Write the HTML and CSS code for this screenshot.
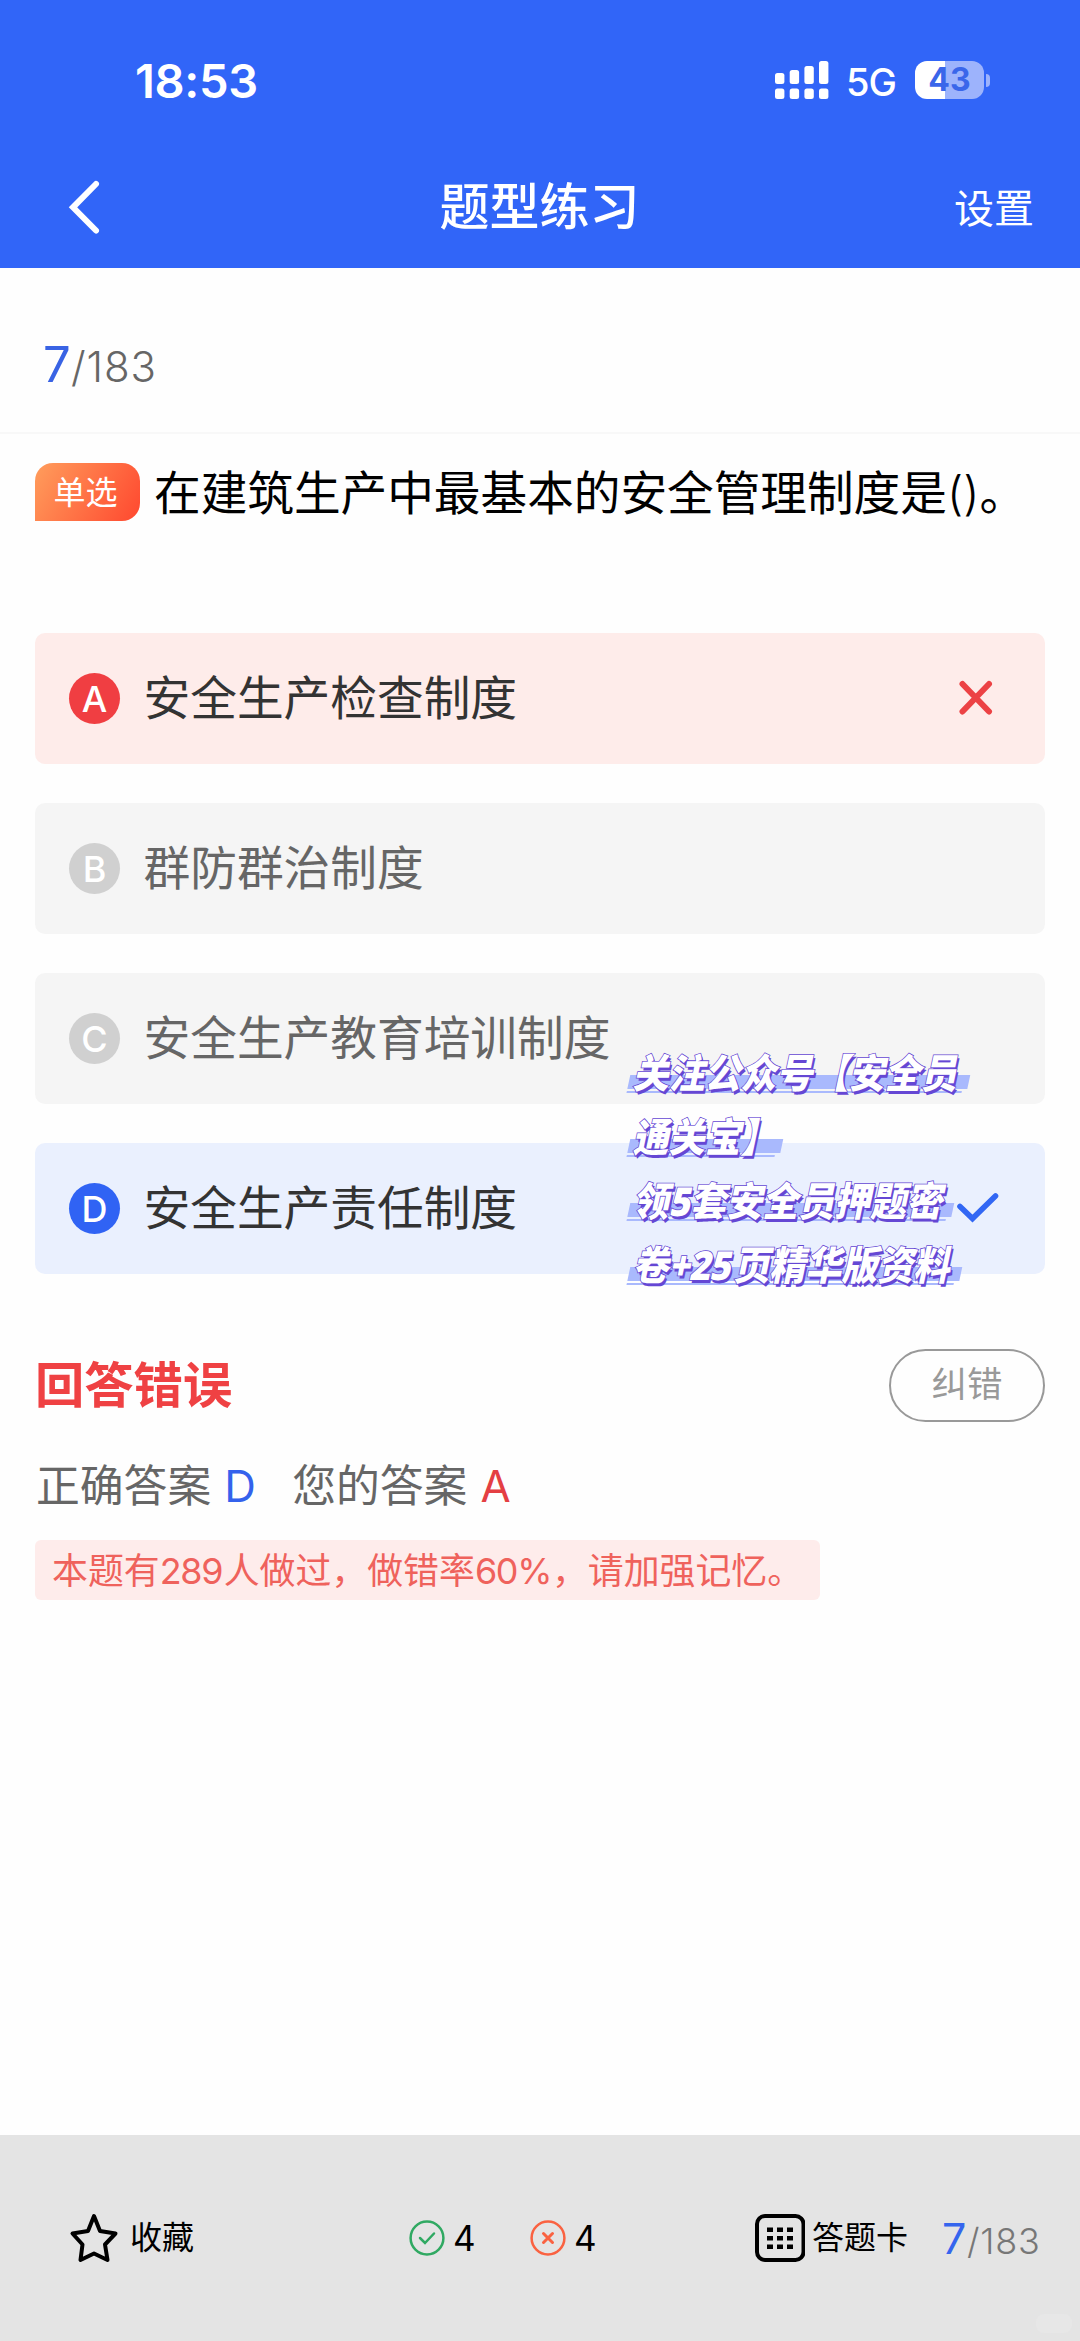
FILE: index.html
```html
<!DOCTYPE html>
<html lang="zh-CN">
<head>
<meta charset="utf-8">
<title>题型练习</title>
<link rel="stylesheet" href="styles.css">
</head>
<body>
<div class="app">
  <header class="header">
    <div class="status">
      <span class="time">18:53</span>
      <span class="status-right">
        <svg class="signal" width="54" height="38" viewBox="0 0 54 38" fill="#fff">
          <rect x="0" y="12" width="9.4" height="11" rx="2.5"/><rect x="14.7" y="9" width="9.4" height="14" rx="2.5"/><rect x="29.4" y="5" width="9.4" height="18" rx="2.5"/><rect x="44" y="0" width="9.4" height="23" rx="2.5"/>
          <rect x="0" y="27.5" width="9.4" height="10.5" rx="2.5"/><rect x="14.7" y="27.5" width="9.4" height="10.5" rx="2.5"/><rect x="29.4" y="27.5" width="9.4" height="10.5" rx="2.5"/><rect x="44" y="27.5" width="9.4" height="10.5" rx="2.5"/>
        </svg>
        <span class="net">5G</span>
        <span class="battery"><span class="battery-body">43</span><span class="battery-nub"></span></span>
      </span>
    </div>
    <nav class="nav">
      <svg class="back" width="36" height="60" viewBox="0 0 36 60" fill="none" stroke="#fff" stroke-width="6" stroke-linecap="round"><path d="M30 7 7 30.300 30 53.500"/></svg>
      <h1 class="title">题型练习</h1>
      <span class="settings">设置</span>
    </nav>
  </header>

  <div class="progress"><b>7</b><span>/183</span></div>

  <main class="main">
    <div class="question"><span class="tag">单选</span><p class="stem">在建筑生产中最基本的安全管理制度是<span class="paren">()</span>。</p></div>

    <div class="options">
      <div class="option wrong"><i class="badge">A</i><span>安全生产检查制度</span>
        <svg class="mark" width="34" height="36" viewBox="0 0 34 36" fill="none" stroke="#ec4245" stroke-width="6" stroke-linecap="round"><path d="M3.500 4 30 31.500M30 4 3.500 31.500"/></svg>
      </div>
      <div class="option"><i class="badge">B</i><span>群防群治制度</span></div>
      <div class="option"><i class="badge">C</i><span>安全生产教育培训制度</span></div>
      <div class="option right"><i class="badge">D</i><span>安全生产责任制度</span>
        <svg class="mark tick" width="44" height="32" viewBox="0 0 44 32" fill="none" stroke="#3267f4" stroke-width="5.600" stroke-linecap="round"><path d="M4 14.500 16.500 26.500 39.500 4"/></svg>
      </div>
      <div class="promo">
        <div class="promo-line l1"><span>关注公众号【安全员</span></div>
        <div class="promo-line l2"><span>通关宝】</span></div>
        <div class="promo-line l3"><span>领<em class="five">5</em>套安全员押题密</span></div>
        <div class="promo-line l4"><span>卷<em class="plus">+25</em>页精华版资料</span></div>
      </div>
    </div>

    <div class="result"><h2>回答错误</h2><button class="report">纠错</button></div>
    <div class="answers"><span>正确答案</span><b class="blue">D</b><span>您的答案</span><b class="red">A</b></div>
    <p class="tip">本题有<span class="num">289</span>人做过，做错率<span class="pct">60%</span>，请加强记忆。</p>
  </main>

  <footer class="footer">
    <svg class="star" width="50" height="52" viewBox="0 0 50 52" fill="none" stroke="#000" stroke-width="4" stroke-linejoin="round"><path d="M25 4 31 19 46.500 21.500 36 32.500 38.500 48 25 41.500 11.500 48 13.500 32.500 3.500 21.500 19 19Z"/></svg>
    <span class="f-label fav">收藏</span>
    <svg class="circle ok" width="36" height="36" viewBox="0 0 36 36" fill="none" stroke="#30a962" stroke-width="2.500" stroke-linecap="round"><circle cx="18" cy="18" r="16.400"/><path d="M11 18 16 23 25 13.500"/></svg>
    <span class="count">4</span>
    <svg class="circle no" width="36" height="36" viewBox="0 0 36 36" fill="none" stroke="#fa6241" stroke-width="2.500" stroke-linecap="round"><circle cx="18" cy="18" r="16.400"/><path stroke-width="3" d="M13.500 13.500 22.500 22.500M22.500 13.500 13.500 22.500"/></svg>
    <span class="count">4</span>
    <svg class="grid" width="50" height="48" viewBox="0 0 50 48"><rect x="2" y="2" width="46.500" height="44" rx="8" fill="none" stroke="#000" stroke-width="4"/><path fill="#000" d="M12 13.500h6v4.500h-6zM22 13.500h6v4.500h-6zM32 13.500h6v4.500h-6zM12 22h6v4.500h-6zM22 22h6v4.500h-6zM32 22h6v4.500h-6zM12 30.500h6V35h-6zM22 30.500h6V35h-6zM32 30.500h6V35h-6z"/></svg>
    <span class="f-label card">答题卡</span>
    <div class="foot-progress"><b>7</b><span>/183</span></div>
    <span class="stamp"></span>
  </footer>
</div>
</body>
</html>
```
FILE: styles.css
```css
* { box-sizing: border-box; margin: 0; padding: 0; }
body { width: 1080px; background: #fefefe; font-family: Inter, "Noto Sans CJK SC", sans-serif; color: #000; }
svg { display: block; flex: none; }
b, i, em { font-weight: 400; font-style: normal; }
.app { display: flex; flex-direction: column; width: 1080px; height: 2341px; overflow: hidden; }

.header { height: 268px; background: #3165f8; color: #fff; flex: none; }
.status { display: flex; align-items: center; justify-content: space-between; height: 160px; padding: 0 90px 0 135px; }
.time { font-size: 47px; font-weight: 600; letter-spacing: -.3px; line-height: 60px; padding-top: 2px; }
.status-right { display: flex; align-items: center; }
.net { width: 86px; padding-left: 17px; font-size: 38px; font-weight: 500; line-height: 44px; letter-spacing: -1px; padding-top: 3px; }
.battery { display: flex; align-items: center; gap: 2px; }
.battery-body { width: 69px; height: 38px; border-radius: 12px; background: linear-gradient(90deg, #fff 43%, #9db3fc 43%); color: #3a66ea; font-size: 32px; line-height: 38px; font-weight: 700; text-align: center; }
.battery-nub { width: 4px; height: 13px; border-radius: 0 6px 6px 0; background: #9db3fc; }
.nav { display: grid; grid-template-columns: 1fr auto 1fr; align-items: center; height: 94px; padding: 0 46px 0 66px; }
.title { margin: 0 20px 0 -1px; font-size: 50px; font-weight: 500; line-height: 60px; }
.settings { justify-self: end; font-size: 40px; line-height: 50px; padding-top: 3px; }

.progress { display: flex; align-items: baseline; height: 166px; padding: 67px 0 0 43px; border-bottom: 2px solid #f8f8f8; color: #666; flex: none; }
.progress b { width: 28px; font-size: 49px; line-height: 60px; color: #3963e4; }
.progress span { font-size: 42px; font-weight: 300; letter-spacing: .9px; }

.main { flex: 1; padding: 29px 35px 0; }
.question { display: flex; align-items: center; height: 58px; }
.tag { width: 105px; height: 58px; padding-right: 4px; border-radius: 18px 18px 18px 0; background: linear-gradient(120deg, #ff9d5c, #ff482f); color: #fff; font-size: 32px; line-height: 60px; text-align: center; }
.stem { margin-left: 14px; font-size: 46.65px; line-height: 58px; white-space: nowrap; padding-top: 2px; }
.paren { font-weight: 300; }

.options { position: relative; display: flex; flex-direction: column; gap: 39.5px; margin-top: 112px; }
.option { display: flex; align-items: center; height: 130.5px; padding: 0 33px 0 34px; border-radius: 10px; background: #f5f5f5; color: #666; font-size: 46.7px; line-height: 60px; }
.badge { width: 51px; height: 51px; margin-right: 23.5px; border-radius: 50%; background: #d0d0d0; color: #fff; font-size: 36px; line-height: 52px; font-weight: 500; text-align: center; }
.wrong { background: #feecea; color: #333; }
.wrong .badge { background: #f03e42; }
.right { background: #eaf0fe; color: #333; }
.right .badge { background: #3063f4; }
.mark { margin-left: auto; margin-right: 19px; }
.tick { margin-right: 12px; }

.promo { position: absolute; left: 594px; top: 416px; color: #fff; font: 900 40px/64px "Noto Sans CJK SC", sans-serif; }
.promo-line { height: 64px; padding-left: 5px; transform: skewX(-12deg); white-space: nowrap; background: linear-gradient(#a9b9fd, #a9b9fd) 0 26px / 100% 14px no-repeat, linear-gradient(#a9b9fd, #a9b9fd) 0 42px / calc(100% - 5px) 2px no-repeat; }
.promo-line span { display: block; transform: scaleX(.9); transform-origin: 0 0; line-height: 44px; -webkit-text-stroke: 1.6px #6547d4; paint-order: stroke fill; text-shadow: 2.5px 2.5px 0 #6547d4; }
.l1 { width: 340px; }
.l2 { width: 153px; }
.l3 { width: 324px; }
.l4 { width: 332px; }
.promo em { display: inline-block; font-family: "Open Sans", sans-serif; font-weight: 800; letter-spacing: -1px; line-height: 44px; }
.five { width: 24px; }
.plus { width: 72px; }

.result { display: flex; justify-content: space-between; align-items: center; height: 73px; margin-top: 75px; }
.result h2 { font-size: 49.3px; line-height: 60px; font-weight: 700; color: #ef4143; }
.report { width: 156px; height: 73px; border: 2.5px solid #999; border-radius: 37px; background: none; color: #999; font: 400 35.5px/60px Inter, "Noto Sans CJK SC", sans-serif; }
.answers { display: flex; height: 60px; margin-top: 35px; color: #666; font-size: 43.8px; line-height: 60px; padding-left: 1px; }
.answers b { width: 81px; padding-left: 13px; }
.answers .blue { color: #3462ec; }
.answers .red { color: #e43f43; }
.tip { width: 785px; height: 60px; margin-top: 23px; padding-left: 17px; border-radius: 6px; background: #feeceb; color: #ef625c; font-size: 35.9px; line-height: 62px; white-space: nowrap; }
.num, .pct { display: inline-block; }
.num { width: 64px; letter-spacing: -1.3px; }
.pct { width: 77px; letter-spacing: -1.3px; }

.footer { position: relative; display: flex; align-items: center; height: 206px; padding: 0 0 0 69px; background: #e4e4e4; flex: none; }
.f-label { font-size: 32px; line-height: 40px; white-space: nowrap; }
.fav { width: 279px; padding-left: 11px; }
.ok { margin-left: 11px; }
.count { width: 85px; padding-left: 8px; font-size: 35px; line-height: 40px; }
.grid { margin-left: 104px; }
.card { padding-left: 7px; width: 137px; }
.foot-progress { display: flex; align-items: baseline; color: #777; }
.foot-progress b { width: 25px; font-size: 43px; line-height: 50px; color: #3565ee; }
.foot-progress span { font-size: 36px; font-weight: 300; letter-spacing: .8px; }
.stamp { position: absolute; right: 8px; bottom: 8px; width: 36px; height: 19px; border-radius: 8px; background: #e7e7e7; }
```
